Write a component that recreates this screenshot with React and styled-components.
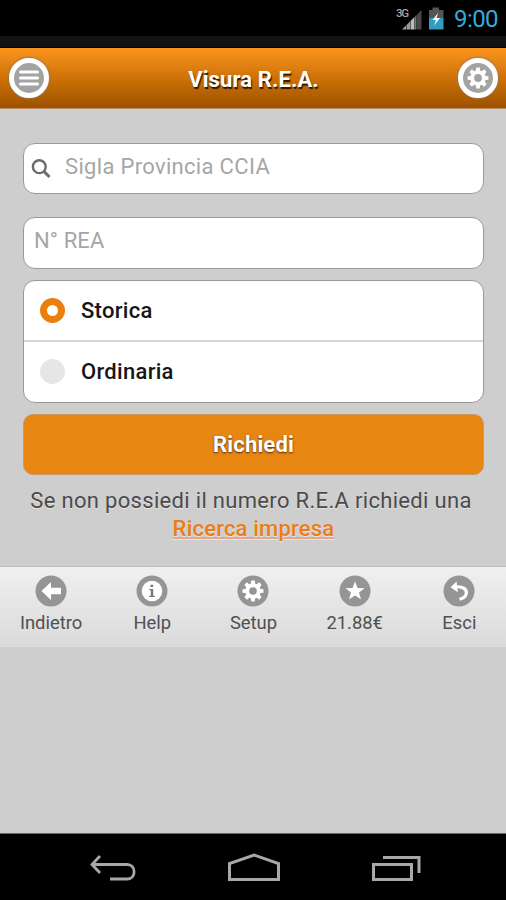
import React, { useState } from "react";
import styled, { createGlobalStyle } from "styled-components";

const GlobalStyle = createGlobalStyle`
  * {
    box-sizing: border-box;
  }
  body {
    margin: 0;
    background-color: #cecece;
    font-family: Roboto, "Liberation Sans", sans-serif;
  }
`;

const Screen = styled.div`
  display: flex;
  flex-direction: column;
  width: 506px;
  height: 900px;
  overflow: hidden;
  background-color: #cecece;
`;

const StatusBar = styled.div`
  display: flex;
  justify-content: flex-end;
  align-items: center;
  flex: none;
  height: 48px;
  padding: 0 8px 11px 0;
  background: linear-gradient(#000 36px, #121312 36px, #121312 47px, #000 47px);
`;

const Clock = styled.span`
  margin-left: 9px;
  color: #35abd9;
  font-size: 24px;
  line-height: 36px;
  letter-spacing: -0.6px;
`;

const Header = styled.header`
  display: flex;
  align-items: center;
  justify-content: space-between;
  flex: none;
  height: 61px;
  padding: 0 8px 0 9px;
  border-bottom: 1px solid #b98a60;
  background: linear-gradient(#fb9419, #e98717 20%, #c96f04 55%, #9d5100);
`;

const Title = styled.h1`
  margin: 0;
  padding-top: 3px;
  color: #fff;
  font-size: 22px;
  font-weight: 700;
  line-height: 30px;
  letter-spacing: 0.12px;
  text-shadow: 1px 2px 1px #2b1500;
`;

const RoundButton = styled.button`
  display: flex;
  align-items: center;
  justify-content: center;
  width: 40px;
  height: 40px;
  padding: 0;
  border: 5px solid #fff;
  border-radius: 50%;
  background-color: #a3a3a3;
  box-shadow: 0 0 2px 1px rgba(150, 120, 90, 0.8);
`;

const Form = styled.form`
  display: flex;
  flex-direction: column;
  flex: none;
  height: 457px;
  padding: 34px 22px 0 23px;
`;

const Field = styled.label`
  display: flex;
  align-items: center;
  height: ${(props) => props.$height}px;
  margin-bottom: ${(props) => props.$gap}px;
  padding: 0 10px;
  border: 1px solid #999;
  border-radius: 12px;
  background-color: #fff;
`;

const SearchIcon = styled.svg`
  flex: none;
  margin-left: -3px;
`;

const Input = styled.input`
  flex: 1;
  min-width: 0;
  height: 44px;
  margin-left: ${(props) => (props.$icon ? "14px" : "0")};
  padding: 0 0 ${(props) => (props.$icon ? "4px" : "6px")};
  border: none;
  outline: none;
  background: transparent;
  color: #222;
  font-family: inherit;
  font-size: 22px;
  letter-spacing: ${(props) => (props.$icon ? "0.32px" : "0.1px")};
  &::placeholder {
    color: #a6a6a6;
    opacity: 1;
  }
`;

const Options = styled.div`
  height: 123px;
  margin-bottom: 11px;
  border: 1px solid #999;
  border-radius: 12px;
  background-color: #fff;
  overflow: hidden;
`;

const Option = styled.div`
  display: flex;
  align-items: center;
  gap: 16px;
  height: ${(props) => (props.$divided ? "61px" : "58px")};
  padding-left: 16px;
  border-bottom: ${(props) => (props.$divided ? "2px solid #d4d4d4" : "none")};
  color: #161616;
  font-size: 22px;
  font-weight: 500;
  letter-spacing: 0.3px;
`;

const Radio = styled.span`
  width: 25px;
  height: 25px;
  border: ${(props) => (props.$checked ? "7px solid #ec7f0b" : "none")};
  border-radius: 50%;
  background-color: ${(props) => (props.$checked ? "#fff" : "#e6e6e6")};
`;

const Submit = styled.button`
  height: 61px;
  padding: 0 0 1px;
  border: 1px solid #c99a62;
  border-radius: 10px;
  background-color: #e88612;
  color: #fff;
  font-family: inherit;
  font-size: 22px;
  font-weight: 700;
  letter-spacing: 0.15px;
  text-shadow: 0 1px 2px #4a2700;
`;

const Hint = styled.p`
  margin: 12px 0 0;
  color: #4a4a4a;
  font-size: 22px;
  line-height: 28px;
  text-align: center;
  white-space: nowrap;
  text-shadow: 0 1px 0 #e6e6e6;
`;

const HintText = styled.span`
  display: block;
  padding-right: 5px;
  letter-spacing: 0.32px;
`;

const Link = styled.a`
  display: block;
  color: #ea7d16;
  font-weight: 500;
  letter-spacing: 0.2px;
  text-decoration: underline;
  text-decoration-color: #e8a58a;
  text-decoration-thickness: 2px;
`;

const Toolbar = styled.nav`
  display: grid;
  grid-template-columns: repeat(5, 1fr);
  flex: none;
  height: 81px;
  border-top: 1px solid #bdbdbd;
  background: linear-gradient(#f0f0f0, #dadada);
`;

const Tool = styled.div`
  display: flex;
  flex-direction: column;
  align-items: center;
  padding-top: 8px;
  padding-left: ${(props) => props.$shift || 0}px;
  color: #505050;
  font-size: 18.4px;
  line-height: 30px;
  svg {
    flex: none;
    margin-bottom: 1px;
  }
`;

const NavBar = styled.div`
  display: flex;
  align-items: center;
  justify-content: space-between;
  flex: none;
  height: 67px;
  margin-top: auto;
  padding: 2px 85px 0 89px;
  border-top: 1px solid #666;
  background-color: #000;
`;

// eight-tooth wheel centred on 0,0
const gearPath = (outer, inner) => {
  const points = [];
  for (let i = 0; i < 8; i++) {
    const a = (i * Math.PI) / 4;
    [[-0.27, inner], [-0.17, outer], [0.17, outer], [0.27, inner]].forEach(([d, r]) => {
      points.push(`${(r * Math.sin(a + d)).toFixed(2)} ${(-r * Math.cos(a + d)).toFixed(2)}`);
    });
  }
  return `M${points.join("L")}Z`;
};

function Disc({ children }) {
  return (
    <svg width="32" height="32" viewBox="-16 -16 32 32">
      <circle r="15.5" fill="#949594" />
      {children}
    </svg>
  );
}

const tools = [
  { label: "Indietro", shift: 1, icon: <path d="M-9.5 0 L0 -9 V-3.2 H10 V3.2 H0 V9Z" fill="#fff" /> },
  {
    label: "Help",
    shift: 1,
    icon: (
      <>
        <circle r="10.3" fill="#fff" />
        <path d="M-1.5 -6.2H1.2V-3.9H-1.5ZM-2.7 -2H1.2V4.8H2.7V6H-2.7V4.8H-1.2V-0.8H-2.7Z" fill="#777" />
      </>
    ),
  },
  {
    label: "Setup",
    shift: 1,
    icon: (
      <>
        <path d={gearPath(10.6, 7.8)} fill="#fff" />
        <circle r="3.8" fill="#949594" />
      </>
    ),
  },
  {
    label: "21.88€",
    shift: 1,
    icon: <path d="M0 -9.8L2.5 -3.1L9.6 -2.8L4 1.5L6 8.3L0 4.4L-6 8.3L-4 1.5L-9.6 -2.8L-2.5 -3.1Z" fill="#fff" />,
  },
  {
    label: "Esci",
    shift: 8,
    icon: (
      <>
        <path d="M-8.5 -3.8L-2.4 -9.6L-1.2 1.2Z" fill="#fff" />
        <path d="M-4 -4.2C3 -4.6 7.4 -2.5 7.4 1.4C7.4 5 4.5 7.2 0.5 8.2" fill="none" stroke="#fff" strokeWidth="3.2" />
      </>
    ),
  },
];

function App() {
  const [kind, setkind] = useState("Storica");

  return (
    <Screen>
      <GlobalStyle />
      <StatusBar>
        <svg width="50" height="36" viewBox="0 0 50 36">
          <text x="1" y="16" fontSize="11.5" fill="#a5a5a5" fontFamily="Roboto" fontWeight="500" textLength="13">3G</text>
          <path d="M7 28.5L11 24.5V28.5Z" fill="#a0a0a0" />
          <path d="M11.5 24L15 20.5V28.5H11.5Z" fill="#999" />
          <path d="M15.5 20L19.5 16V28.5H15.5Z" fill="#bbb" />
          <path d="M20 15.5L21.5 14V28.5H20Z" fill="#777" />
          <path d="M22 13.5L26.5 9V28.5H22Z" fill="#484848" />
          <path d="M34 9H37.5V6.5H44V9H48.5V17H34Z" fill="#555" />
          <path d="M34 17H48.5V28.5H34Z" fill="#319cc2" />
          <path d="M43 12L37.5 19H41L39 24.5L45 17H41.5Z" fill="#fff" />
        </svg>
        <Clock>9:00</Clock>
      </StatusBar>
      <Header>
        <RoundButton type="button" aria-label="Menu">
          <svg width="30" height="30" viewBox="0 0 30 30">
            <path d="M6.5 9H23.5M6.5 15H23.5M6.5 21H23.5" stroke="#fff" strokeWidth="3" strokeLinecap="round" />
          </svg>
        </RoundButton>
        <Title>Visura R.E.A.</Title>
        <RoundButton type="button" aria-label="Setup">
          <svg width="30" height="30" viewBox="-15 -15 30 30">
            <path d={gearPath(10.6, 7.8)} fill="#fff" />
            <circle r="3.9" fill="#a3a3a3" />
          </svg>
        </RoundButton>
      </Header>
      <Form onSubmit={(e) => e.preventDefault()}>
        <Field $height={51} $gap={23}>
          <SearchIcon width="20" height="20" viewBox="0 0 20 20">
            <circle cx="8.3" cy="7.7" r="6.4" fill="none" stroke="#6c6c6c" strokeWidth="2.4" />
            <path d="M12.8 12.2L18.5 18" stroke="#6c6c6c" strokeWidth="3" />
          </SearchIcon>
          <Input $icon placeholder="Sigla Provincia CCIA" />
        </Field>
        <Field $height={52} $gap={11}>
          <Input placeholder="N° REA" />
        </Field>
        <Options>
          {["Storica", "Ordinaria"].map((name, i) => (
            <Option key={name} $divided={i === 0} onClick={() => setkind(name)}>
              <Radio $checked={kind === name} />
              {name}
            </Option>
          ))}
        </Options>
        <Submit type="submit">Richiedi</Submit>
        <Hint>
          <HintText>Se non possiedi il numero R.E.A richiedi una</HintText>
          <Link>Ricerca impresa</Link>
        </Hint>
      </Form>
      <Toolbar>
        {tools.map((tool) => (
          <Tool key={tool.label} $shift={tool.shift}>
            <Disc>{tool.icon}</Disc>
            {tool.label}
          </Tool>
        ))}
      </Toolbar>
      <NavBar>
        <svg width="48" height="30" viewBox="0 0 48 30" fill="none" stroke="#a8a8a8" strokeWidth="2.8">
          <path d="M11 3L3 11.5L11 20M3 11.5H38C47.5 11.5 47.5 26 38 26H21" />
        </svg>
        <svg width="54" height="30" viewBox="0 0 54 30" fill="none" stroke="#a8a8a8" strokeWidth="3">
          <path d="M2.5 26.5V10.5L27 2L51.5 10.5V26.5Z" />
        </svg>
        <svg width="50" height="30" viewBox="0 0 50 30" fill="none" stroke="#a8a8a8" strokeWidth="3">
          <path d="M2.5 11.5H40.5V26.5H2.5ZM12 4.5H48V20" />
        </svg>
      </NavBar>
    </Screen>
  );
}

export default App;
